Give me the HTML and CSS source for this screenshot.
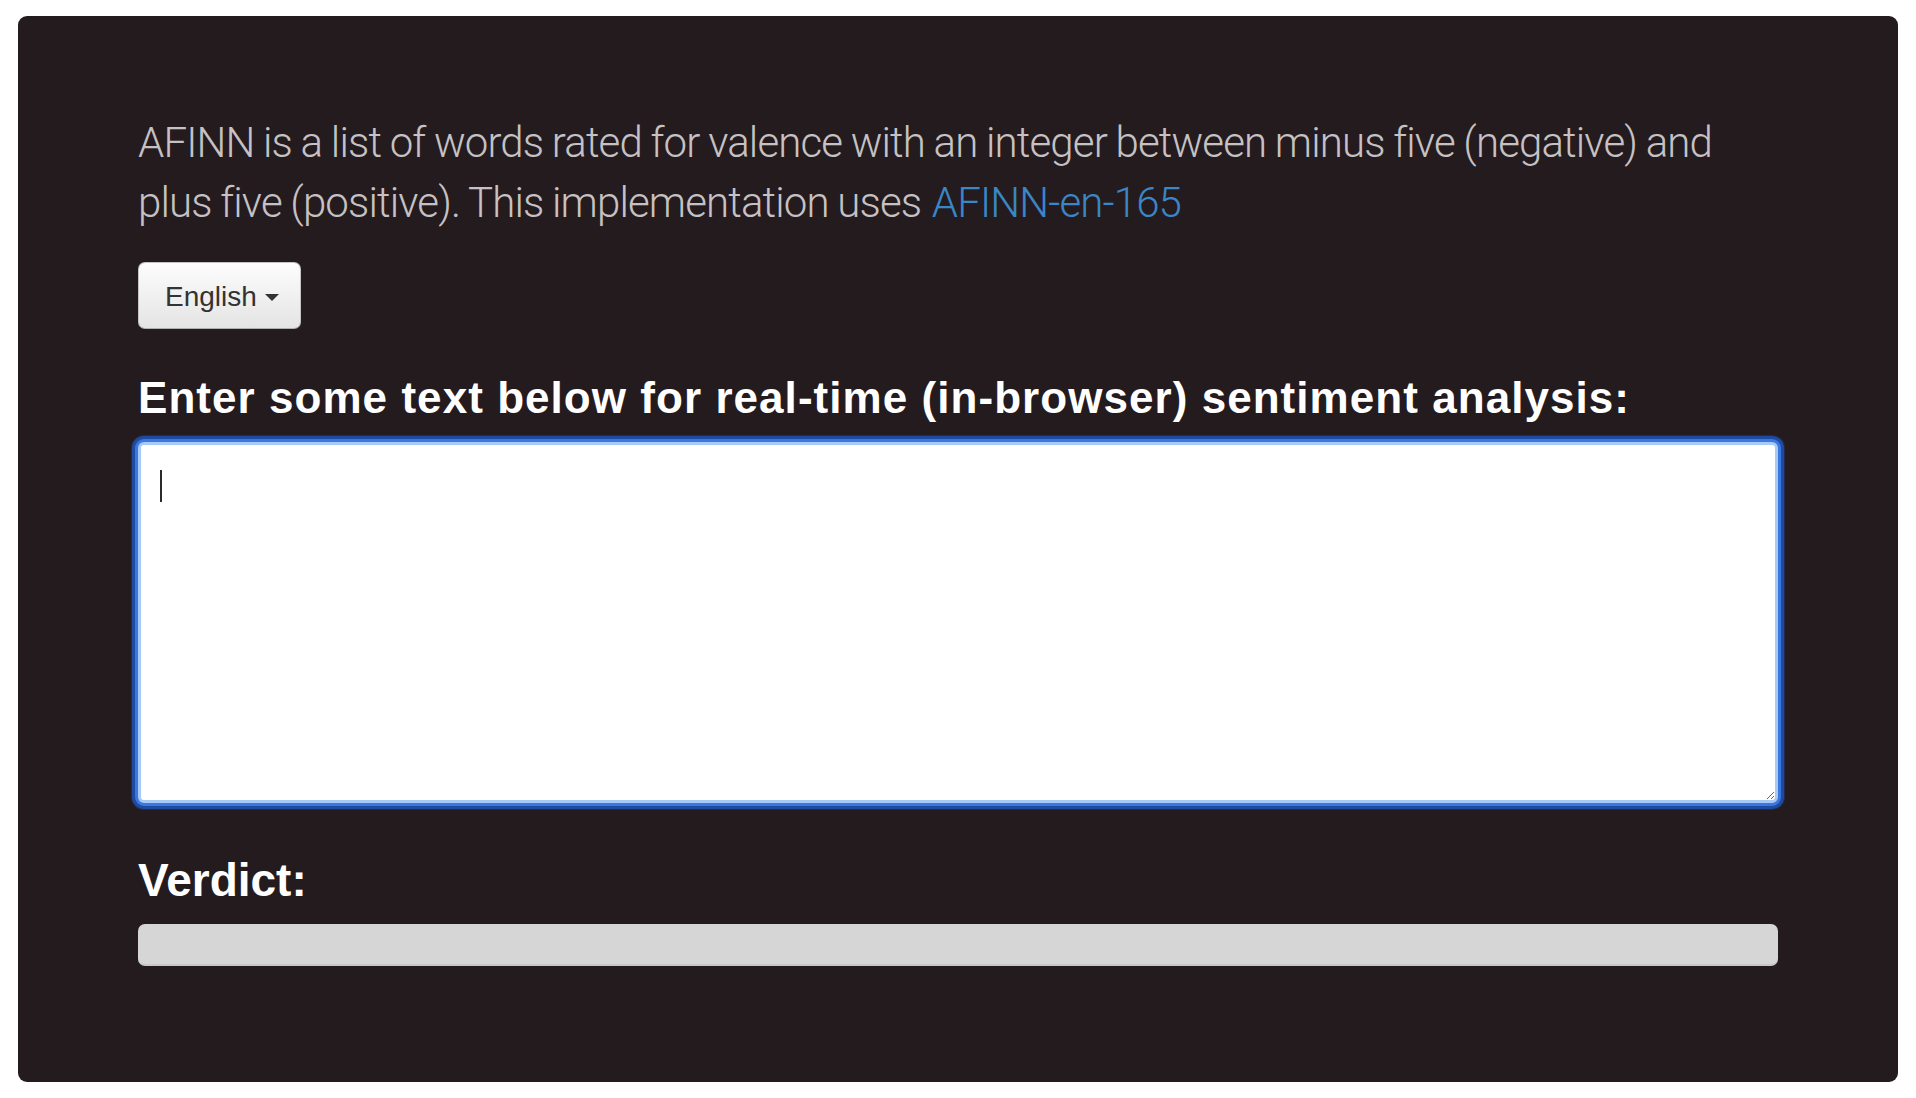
FILE: index.html
```html
<!DOCTYPE html>
<html lang="en">
<head>
<meta charset="utf-8">
<title>AFINN sentiment analysis</title>
<link rel="stylesheet" href="styles.css">
</head>
<body>
<main class="panel">
  <p class="lead">AFINN is a list of words rated for valence with an integer between minus five (negative) and plus five (positive). This implementation uses <a href="#" class="link">AFINN-en-165</a></p>
  <div class="lang">
    <button class="btn" type="button">English <span class="caret"></span></button>
  </div>
  <h3 class="prompt">Enter some text below for real-time (in-browser) sentiment analysis:</h3>
  <div class="input-wrap">
    <textarea class="input" aria-label="Text to analyse"></textarea>
    <span class="text-caret"></span>
  </div>
  <h2 class="verdict">Verdict:</h2>
  <div class="bar"></div>
</main>
</body>
</html>
```

FILE: styles.css
```css
html, body {
  margin: 0;
  padding: 0;
  background: #ffffff;
}

body {
  padding: 16px 18px 16px 18px;
  font-family: "Liberation Sans", Arial, sans-serif;
}

.panel {
  box-sizing: border-box;
  width: 1880px;
  height: 1066px;
  background: #241b1f;
  border-radius: 9px;
  padding: 97px 120px 0 120px;
  display: flex;
  flex-direction: column;
}

.lead {
  margin: 0;
  max-width: 1610px;
  font-family: Roboto, "Liberation Sans", sans-serif;
  font-weight: 300;
  font-size: 42px;
  line-height: 60px;
  color: #c6c2c4;
  letter-spacing: -0.86px;
  word-spacing: -0.8px;
}

.link {
  color: #3a86c6;
  text-decoration: none;
  margin-left: 2px;
}

.lang {
  margin-top: 29px;
  display: flex;
}

.btn {
  box-sizing: border-box;
  height: 67px;
  padding: 14px 21px 12px 26px;
  font-family: "Liberation Sans", Arial, sans-serif;
  font-size: 28px;
  line-height: 39px;
  color: #333333;
  background: linear-gradient(#fdfdfd, #e4e4e4);
  border: 1px solid #c4c4c4;
  border-bottom-color: #b0b0b0;
  border-radius: 7px;
  display: flex;
  align-items: center;
  gap: 8px;
}

.caret {
  width: 0;
  height: 0;
  border-left: 7px solid transparent;
  border-right: 7px solid transparent;
  border-top: 7px solid #333333;
  margin-top: 2px;
}

.prompt {
  margin: 42px 0 0 0;
  font-size: 44px;
  line-height: 53px;
  font-weight: 700;
  color: #ffffff;
  letter-spacing: 1.05px;
}

.input-wrap {
  position: relative;
  margin-top: 18px;
}

.input {
  display: block;
  box-sizing: border-box;
  width: 1640px;
  height: 361px;
  margin: 0;
  border: 3px solid #a9c9f7;
  border-radius: 6px;
  background: #ffffff;
  box-shadow: 0 0 0 3px #3a78de, 0 0 0 6px #1f4aa2, 0 0 0 7px rgba(31, 74, 162, 0.35);
  outline: none;
  padding: 10px 20px;
  font-family: "Liberation Sans", Arial, sans-serif;
  font-size: 28px;
}

.text-caret {
  position: absolute;
  left: 22px;
  top: 28px;
  width: 2px;
  height: 32px;
  background: #2b2b2b;
}

.verdict {
  margin: 50px 0 0 0;
  font-size: 46px;
  line-height: 55px;
  font-weight: 700;
  color: #ffffff;
}

.bar {
  margin-top: 16px;
  width: 1640px;
  height: 42px;
  box-sizing: border-box;
  background: #d6d6d6;
  border-bottom: 2px solid #c8c8c8;
  border-radius: 7px;
}
```
